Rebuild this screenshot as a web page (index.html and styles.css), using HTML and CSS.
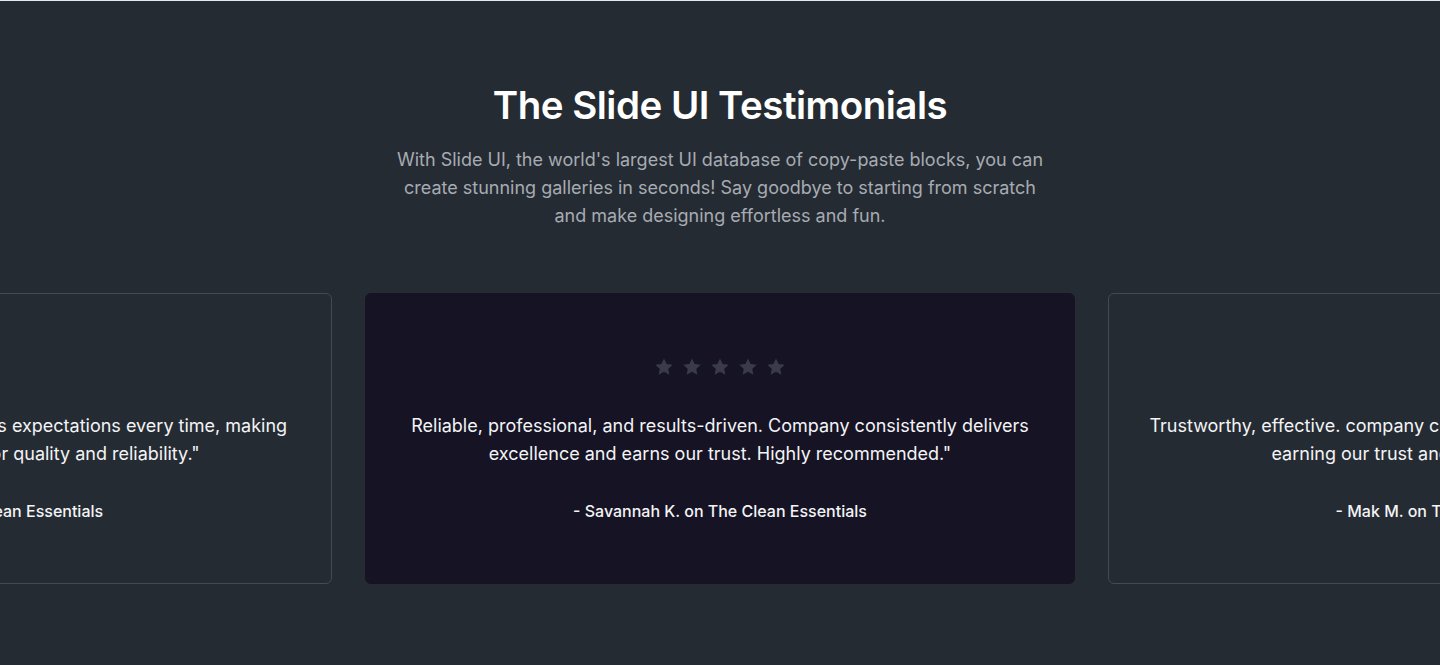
FILE: index.html
```html
<!DOCTYPE html>
<html lang="en">
<head>
<meta charset="utf-8">
<title>The Slide UI Testimonials</title>
<link rel="stylesheet" href="styles.css">
</head>
<body>
<section class="testimonials">
  <header class="intro">
    <h1 class="title">The Slide UI Testimonials</h1>
    <p class="lead">With Slide UI, the world's largest UI database of copy-paste blocks, you can create stunning galleries in seconds! Say goodbye to starting from scratch and make designing effortless and fun.</p>
  </header>
  <div class="track">
    <article class="card">
      <div class="stars hidden">
        <svg viewBox="0 0 20 20"><path d="M10 1.6l2.6 5.5 6 .7-4.4 4.1 1.2 5.9L10 14.8l-5.4 3 1.2-5.9L1.4 7.8l6-.7z"/></svg>
        <svg viewBox="0 0 20 20"><path d="M10 1.6l2.6 5.5 6 .7-4.4 4.1 1.2 5.9L10 14.8l-5.4 3 1.2-5.9L1.4 7.8l6-.7z"/></svg>
        <svg viewBox="0 0 20 20"><path d="M10 1.6l2.6 5.5 6 .7-4.4 4.1 1.2 5.9L10 14.8l-5.4 3 1.2-5.9L1.4 7.8l6-.7z"/></svg>
        <svg viewBox="0 0 20 20"><path d="M10 1.6l2.6 5.5 6 .7-4.4 4.1 1.2 5.9L10 14.8l-5.4 3 1.2-5.9L1.4 7.8l6-.7z"/></svg>
        <svg viewBox="0 0 20 20"><path d="M10 1.6l2.6 5.5 6 .7-4.4 4.1 1.2 5.9L10 14.8l-5.4 3 1.2-5.9L1.4 7.8l6-.7z"/></svg>
      </div>
      <p class="quote">Fast, friendly, and dependable. Exceeds expectations every time, making them our top pick for superior quality and reliability."</p>
      <p class="author">- Ana M. on The Clean Essentials</p>
    </article>
    <article class="card active">
      <div class="stars">
        <svg viewBox="0 0 20 20"><path d="M10 1.6l2.6 5.5 6 .7-4.4 4.1 1.2 5.9L10 14.8l-5.4 3 1.2-5.9L1.4 7.8l6-.7z"/></svg>
        <svg viewBox="0 0 20 20"><path d="M10 1.6l2.6 5.5 6 .7-4.4 4.1 1.2 5.9L10 14.8l-5.4 3 1.2-5.9L1.4 7.8l6-.7z"/></svg>
        <svg viewBox="0 0 20 20"><path d="M10 1.6l2.6 5.5 6 .7-4.4 4.1 1.2 5.9L10 14.8l-5.4 3 1.2-5.9L1.4 7.8l6-.7z"/></svg>
        <svg viewBox="0 0 20 20"><path d="M10 1.6l2.6 5.5 6 .7-4.4 4.1 1.2 5.9L10 14.8l-5.4 3 1.2-5.9L1.4 7.8l6-.7z"/></svg>
        <svg viewBox="0 0 20 20"><path d="M10 1.6l2.6 5.5 6 .7-4.4 4.1 1.2 5.9L10 14.8l-5.4 3 1.2-5.9L1.4 7.8l6-.7z"/></svg>
      </div>
      <p class="quote">Reliable, professional, and results-driven. Company consistently delivers excellence and earns our trust. Highly recommended."</p>
      <p class="author">- Savannah K. on The Clean Essentials</p>
    </article>
    <article class="card">
      <div class="stars hidden">
        <svg viewBox="0 0 20 20"><path d="M10 1.6l2.6 5.5 6 .7-4.4 4.1 1.2 5.9L10 14.8l-5.4 3 1.2-5.9L1.4 7.8l6-.7z"/></svg>
        <svg viewBox="0 0 20 20"><path d="M10 1.6l2.6 5.5 6 .7-4.4 4.1 1.2 5.9L10 14.8l-5.4 3 1.2-5.9L1.4 7.8l6-.7z"/></svg>
        <svg viewBox="0 0 20 20"><path d="M10 1.6l2.6 5.5 6 .7-4.4 4.1 1.2 5.9L10 14.8l-5.4 3 1.2-5.9L1.4 7.8l6-.7z"/></svg>
        <svg viewBox="0 0 20 20"><path d="M10 1.6l2.6 5.5 6 .7-4.4 4.1 1.2 5.9L10 14.8l-5.4 3 1.2-5.9L1.4 7.8l6-.7z"/></svg>
        <svg viewBox="0 0 20 20"><path d="M10 1.6l2.6 5.5 6 .7-4.4 4.1 1.2 5.9L10 14.8l-5.4 3 1.2-5.9L1.4 7.8l6-.7z"/></svg>
      </div>
      <p class="quote">Trustworthy, effective. company consistently surpasses our expectations, earning our trust and confidence every visit."</p>
      <p class="author">- Mak M. on The Clean Essentials</p>
    </article>
  </div>
</section>
</body>
</html>
```

FILE: styles.css
```css
* { box-sizing: border-box; }

html, body {
  margin: 0;
  padding: 0;
}

body {
  background: #252b33;
  font-family: Inter, "Noto Sans", sans-serif;
  color: #f3f4f6;
  border-top: 1px solid #e5e7eb;
  min-height: 665px;
  overflow: hidden;
}

.testimonials {
  padding-top: 80px;
  padding-bottom: 80px;
}

.intro {
  max-width: 650px;
  margin: 0 auto;
  text-align: center;
}

.title {
  margin: 0;
  font-size: 38.5px;
  line-height: 48px;
  font-weight: 600;
  letter-spacing: -0.5px;
  color: #ffffff;
}

.lead {
  margin: 17px 0 0;
  font-size: 18px;
  line-height: 28px;
  color: #a7abb2;
}

.track {
  margin-top: 63px;
  display: flex;
  justify-content: center;
  gap: 33px;
  overflow: hidden;
}

.card {
  flex: 0 0 710px;
  height: 291px;
  padding: 63px 36px 0;
  border: 1px solid #444a52;
  border-radius: 6px;
  text-align: center;
}

.card.active {
  background: #161324;
  border-color: #161324;
}

.stars {
  display: flex;
  justify-content: center;
  gap: 8px;
  height: 20px;
}

.stars svg {
  width: 20px;
  height: 20px;
  fill: #393b4b;
}

.stars.hidden {
  visibility: hidden;
}

.quote {
  margin: 35px 0 0;
  font-size: 18px;
  line-height: 28px;
  color: #f3f4f6;
}

.author {
  margin: 31px 0 0;
  font-size: 16px;
  line-height: 24px;
  font-weight: 500;
  color: #f3f4f6;
}
```
